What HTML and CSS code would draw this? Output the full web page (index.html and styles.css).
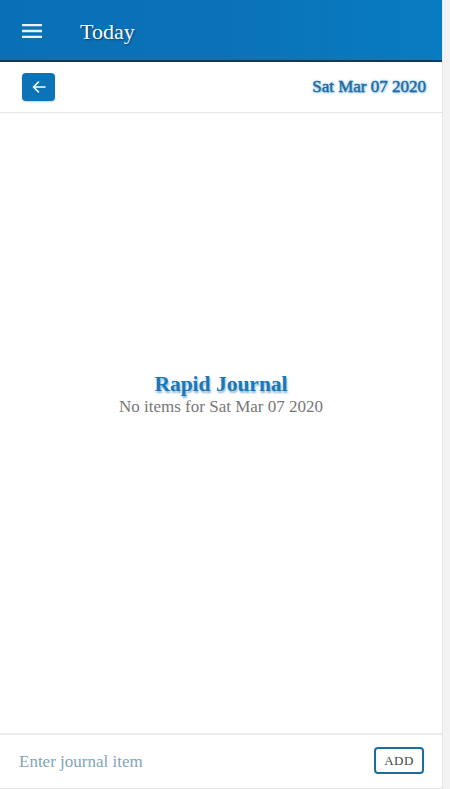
FILE: index.html
```html
<!DOCTYPE html>
<html>
<head>
<meta charset="utf-8">
<link rel="stylesheet" href="styles.css">
</head>
<body>
<div class="app">
  <header class="topbar">
    <span class="menu-icon">
      <svg width="20" height="14" viewBox="0 0 20 14"><path d="M0 1h20M0 7h20M0 13h20" stroke="#e6f1fa" stroke-width="2.4" fill="none"/></svg>
    </span>
    <h1 class="title">Today</h1>
  </header>
  <div class="subbar">
    <button class="back-btn">
      <svg width="14" height="12" viewBox="0 0 14 12"><path d="M13 6H1.5M6.5 1L1.5 6l5 5" stroke="#fff" stroke-width="1.6" fill="none" stroke-linecap="round" stroke-linejoin="round"/></svg>
    </button>
    <span class="date">Sat Mar 07 2020</span>
  </div>
  <main class="content">
    <div class="app-name">Rapid Journal</div>
    <div class="empty">No items for Sat Mar 07 2020</div>
  </main>
  <footer class="entry">
    <span class="placeholder">Enter journal item</span>
    <button class="add-btn">ADD</button>
  </footer>
</div>
</body>
</html>
```
FILE: styles.css
```css
html, body {
  margin: 0;
  padding: 0;
  height: 100%;
  background: #f3f3f3;
  font-family: "Liberation Serif", "Times New Roman", serif;
}
.app {
  width: 443px;
  height: 789px;
  background: #fff;
  border-right: 1px solid #e6e6e6;
  display: flex;
  flex-direction: column;
  box-sizing: border-box;
}
.topbar {
  height: 62px;
  box-sizing: border-box;
  background: linear-gradient(90deg, #0a70b6 0%, #0b72b8 50%, #087cc1 100%);
  border-bottom: 2px solid #0a3a66;
  display: flex;
  align-items: center;
  padding-left: 22px;
  flex-shrink: 0;
}
.menu-icon {
  display: flex;
  width: 20px;
  height: 14px;
  margin-top: 1px;
}
.title {
  margin: 3px 0 0 38px;
  color: #fff;
  font-size: 22px;
  font-weight: normal;
  text-shadow: 1px 1px 2px rgba(0, 30, 60, 0.6);
}
.subbar {
  height: 51px;
  box-sizing: border-box;
  border-bottom: 1px solid #e8e8e8;
  display: flex;
  align-items: center;
  justify-content: space-between;
  padding: 0 16px 0 22px;
  flex-shrink: 0;
}
.back-btn {
  width: 33px;
  height: 28px;
  border: none;
  border-radius: 4px;
  background: #0b74b9;
  display: flex;
  align-items: center;
  justify-content: center;
  padding: 0;
  box-shadow: 0 1px 2px rgba(0,0,0,0.2);
}
.date {
  color: #23699c;
  font-size: 17px;
  font-weight: normal;
  -webkit-text-stroke: 0.4px #23699c;
  text-shadow: 0 0 3px rgba(80, 170, 230, 0.8), 1px 1px 2px rgba(80, 170, 230, 0.6);
}
.content {
  flex: 1;
  display: flex;
  flex-direction: column;
  align-items: center;
  justify-content: center;
  padding-bottom: 56px;
}
.app-name {
  color: #1a78b8;
  font-size: 21.5px;
  font-weight: bold;
  text-shadow: 1px 2px 2px rgba(40, 120, 180, 0.55);
  line-height: 24px;
}
.empty {
  color: #777;
  font-size: 17px;
  line-height: 22px;
}
.entry {
  height: 56px;
  box-sizing: border-box;
  border-top: 2px solid #ececec;
  border-bottom: 1px solid #e4e4e4;
  display: flex;
  align-items: center;
  justify-content: space-between;
  padding: 0 18px 2px 19px;
  flex-shrink: 0;
}
.placeholder {
  color: #7fa6b8;
  font-size: 17px;
  margin-top: 2px;
}
.add-btn {
  width: 50px;
  height: 27px;
  box-sizing: border-box;
  border: 2px solid #1b6e9e;
  border-radius: 4px;
  background: #fff;
  color: #444;
  font-family: "Liberation Serif", "Times New Roman", serif;
  font-size: 13px;
  padding: 0;
  letter-spacing: 0.5px;
}
```
